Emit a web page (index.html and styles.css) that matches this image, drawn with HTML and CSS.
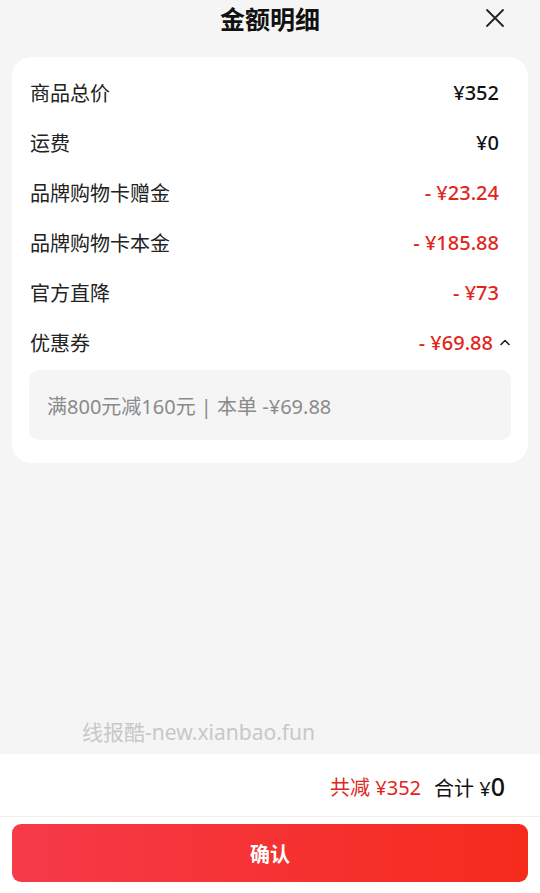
FILE: index.html
```html
<!DOCTYPE html>
<html lang="zh-CN">
  <head>
    <meta charset="UTF-8" />
    <meta name="viewport" content="width=device-width, initial-scale=1.0" />
    <title>金额明细</title>
    <link rel="stylesheet" href="styles.css">
  </head>
  <body>
    <div class="page">
      <div class="content">
        <div class="header">
          <div class="title">金额明细</div>
          <div class="close-btn">
            <svg width="20" height="20" viewBox="0 0 20 20">
              <path d="M2 2 L18 18 M18 2 L2 18" stroke="#222" stroke-width="1.8" fill="none" stroke-linecap="round" />
            </svg>
          </div>
        </div>

        <div class="card">
          <div class="row">
            <span class="label">商品总价</span>
            <span class="value">¥352</span>
          </div>
          <div class="row">
            <span class="label">运费</span>
            <span class="value">¥0</span>
          </div>
          <div class="row">
            <span class="label">品牌购物卡赠金</span>
            <span class="value red">- ¥23.24</span>
          </div>
          <div class="row">
            <span class="label">品牌购物卡本金</span>
            <span class="value red">- ¥185.88</span>
          </div>
          <div class="row">
            <span class="label">官方直降</span>
            <span class="value red">- ¥73</span>
          </div>
          <div class="row row-open">
            <span class="label">优惠券</span>
            <span class="value red">- ¥69.88
              <svg class="chevron" width="12" height="8" viewBox="0 0 12 8">
                <path d="M2 6.5 L6 2.5 L10 6.5" stroke="#222" stroke-width="1.6" fill="none" stroke-linecap="round" stroke-linejoin="round" />
              </svg>
            </span>
          </div>
          <div class="coupon">满800元减160元 | 本单 -¥69.88</div>
        </div>

        <div class="watermark">线报酷-new.xianbao.fun</div>
      </div>

      <div class="footer">
        <div class="summary">
          <span class="saved">共减 ¥352</span>
          <span class="total">合计 ¥<b>0</b></span>
        </div>
        <div class="footer-btn">
          <button class="confirm-btn">确认</button>
        </div>
      </div>
    </div>
  </body>
</html>
```

FILE: styles.css
```css
:root {
  --bg-color: #f5f5f5;
  --red: #e1251b;
  --text-color: #1a1a1a;
  --grey-text: #8a8a8a;
  font-family: "Noto Sans", "Noto Sans CJK SC", sans-serif;
}

body {
  margin: 0;
  background-color: var(--bg-color);
  color: var(--text-color);
}

.page {
  height: 100vh;
  display: flex;
  flex-direction: column;
}

.content {
  flex: 1;
  display: flex;
  flex-direction: column;
}

.header {
  position: relative;
  height: 36px;
  display: flex;
  align-items: center;
  justify-content: center;
}

.title {
  font-size: 25px;
  font-weight: bold;
  color: #111;
}

.close-btn {
  position: absolute;
  right: 35px;
  top: 8px;
  width: 20px;
  height: 20px;
}

.card {
  margin: 21px 12px 0;
  padding: 10px 17px 23px 18px;
  background-color: #fff;
  border-radius: 20px;
}

.row {
  height: 50px;
  display: flex;
  align-items: center;
  justify-content: space-between;
  padding-right: 12px;
}

.row.row-open {
  padding-right: 0;
}

.label {
  font-size: 20px;
  color: #222;
}

.value {
  font-size: 20px;
  font-weight: 500;
  color: #111;
  display: flex;
  align-items: center;
}

.value.red {
  color: var(--red);
}

.chevron {
  margin-left: 6px;
}

.coupon {
  margin: 3px 0 0 -1px;
  height: 70px;
  display: flex;
  align-items: center;
  padding-left: 18px;
  background-color: var(--bg-color);
  border-radius: 10px;
  font-size: 20px;
  color: var(--grey-text);
}

.watermark {
  margin-top: auto;
  padding: 0 0 8px 82px;
  font-size: 21px;
  color: #c8c8c8;
}

.footer {
  background-color: #fff;
}

.summary {
  height: 63px;
  padding-top: 2px;
  box-sizing: border-box;
  display: flex;
  align-items: center;
  justify-content: flex-end;
  gap: 13px;
  padding-right: 35px;
  border-bottom: 1px solid #eee;
  font-size: 20px;
}

.saved {
  color: var(--red);
}

.total {
  color: #111;
}

.total b {
  font-size: 25px;
  font-weight: 500;
}

.footer-btn {
  padding: 7px 12px 11px;
}

.confirm-btn {
  width: 100%;
  height: 58px;
  border: none;
  border-radius: 9px;
  background: linear-gradient(to right, #f63a4a, #f52b1c);
  color: #fff;
  font-family: inherit;
  font-size: 20px;
  font-weight: bold;
}
```
